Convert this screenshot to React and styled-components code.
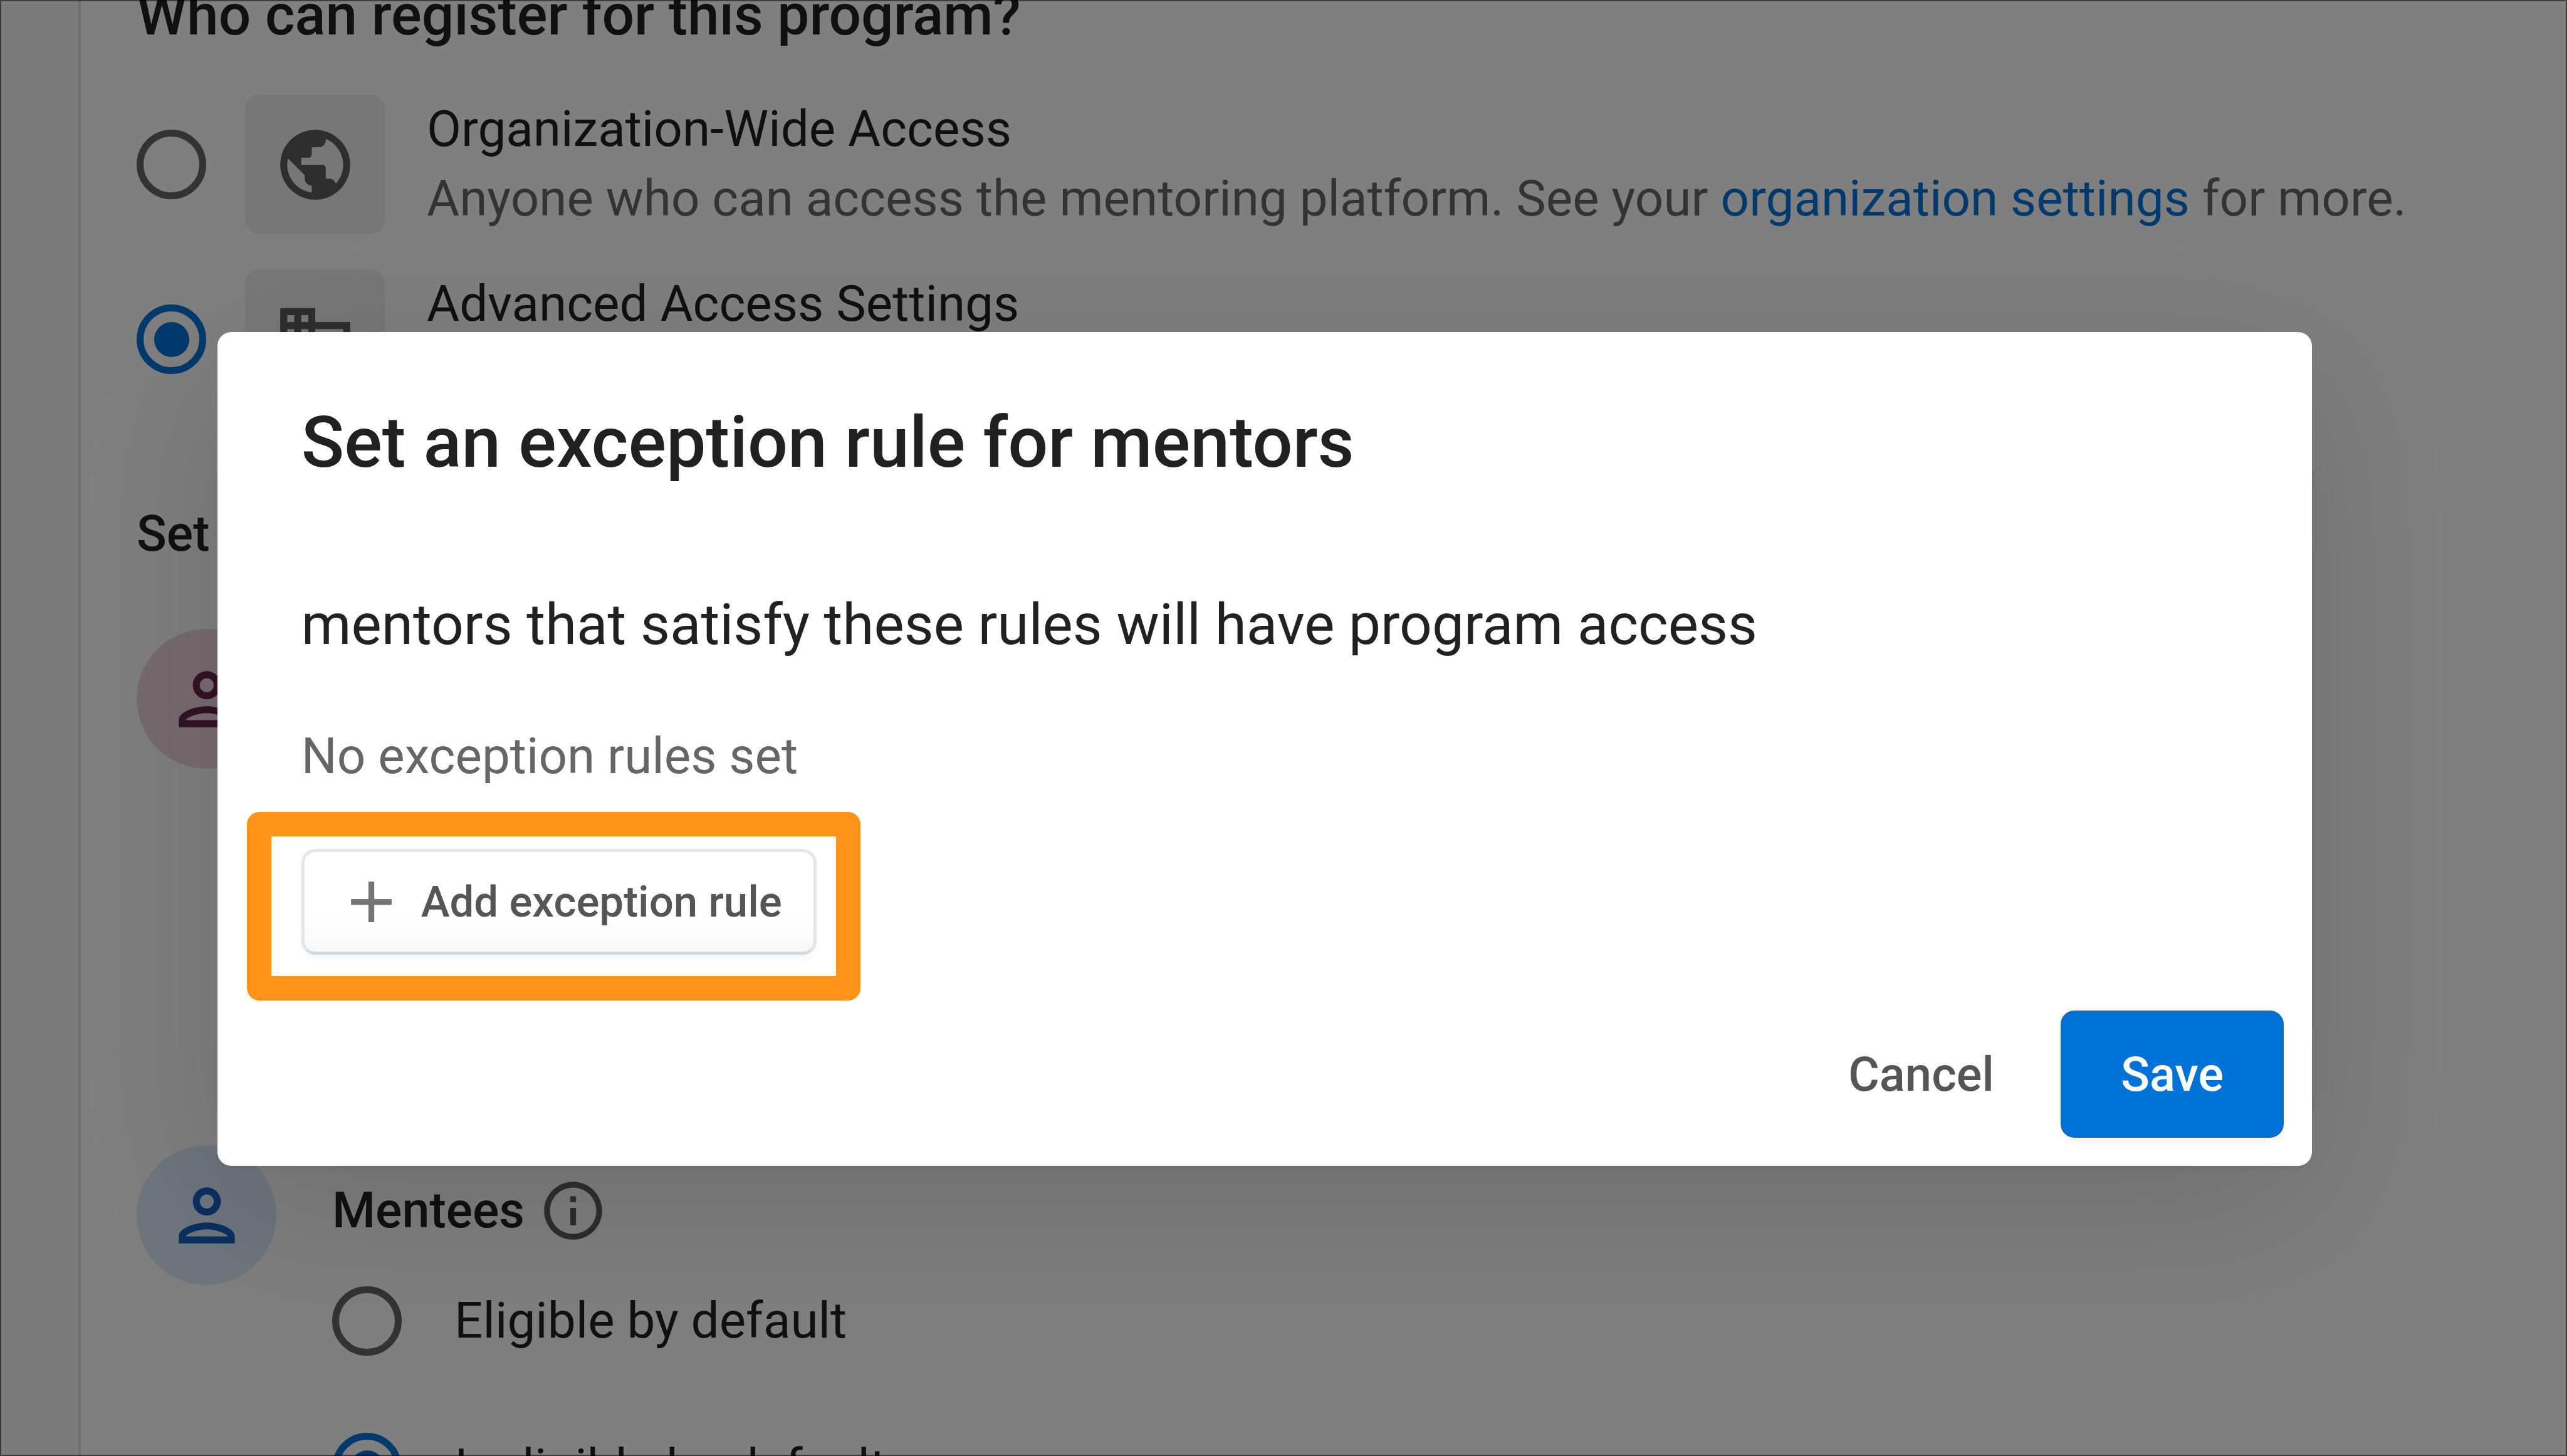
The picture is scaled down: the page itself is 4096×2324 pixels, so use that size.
import React from "react";
import styled, { createGlobalStyle } from "styled-components";
import {
  MdPublic,
  MdDomain,
  MdOutlinePerson,
  MdOutlineInfo,
  MdAdd
} from "react-icons/md";

const GlobalStyle = createGlobalStyle`
  * {
    box-sizing: border-box;
  }

  body {
    margin: 0;
    overflow: hidden;
    background: #ffffff;
    color: #212121;
    font-family: Roboto, "Liberation Sans", sans-serif;
    font-size: 80px;
    line-height: 111px;
  }
`;

const Page = styled.div`
  display: flex;
  height: 100vh;
  overflow: hidden;
`;

const Rail = styled.div`
  flex: none;
  width: 129px;
  background: #f6f6f6;
  border-right: 4px solid #dcdcdc;
`;

const Content = styled.main`
  flex: 1;
  min-width: 0;
  padding-left: 89px;
`;

const SectionTitle = styled.h2`
  margin: 0 0 103px;
  font-size: 91px;
  font-weight: 500;
  line-height: 48px;
`;

const AccessList = styled.div`
  display: flex;
  flex-direction: column;
  gap: 56px;
`;

const AccessRow = styled.label`
  display: flex;
  align-items: center;
`;

const Radio = styled.input.attrs({ type: "radio" })`
  appearance: none;
  flex: none;
  display: grid;
  place-items: center;
  width: 111px;
  height: 111px;
  margin: 0;
  border: 11px solid #666666;
  border-radius: 50%;

  &:checked {
    border-color: #0072d8;
  }

  &:checked::before {
    content: "";
    width: 56px;
    height: 56px;
    border-radius: 50%;
    background: #0072d8;
  }
`;

const IconTile = styled.span`
  flex: none;
  display: grid;
  place-items: center;
  width: 223px;
  height: 223px;
  margin: 0 67px 0 62px;
  border-radius: 22px;
  background: #eeeeee;
  color: #5c5c5c;
  font-size: 134px;
`;

const AccessText = styled.span`
  display: flex;
  flex-direction: column;
  align-self: flex-start;
  white-space: nowrap;
`;

const Description = styled.span`
  color: #666666;
`;

const Link = styled.a`
  color: #0072d8;
  text-decoration: none;
`;

const Subtitle = styled.h3`
  margin: 144px 0 96px;
  font-size: 79px;
  font-weight: 500;
`;

const RoleGroup = styled.section`
  display: flex;
  align-items: flex-start;
  gap: 89px;
  min-height: 824px;
`;

const Avatar = styled.div`
  flex: none;
  display: grid;
  place-items: center;
  width: 223px;
  height: 223px;
  border-radius: 50%;
  background: ${props => (props.$role === "mentor" ? "#f0d6e0" : "#dcebfa")};
  color: ${props => (props.$role === "mentor" ? "#66244a" : "#1460c0")};
  font-size: 134px;
`;

const RoleBody = styled.div`
  padding-top: 49px;
`;

const RoleName = styled.h4`
  display: flex;
  align-items: center;
  gap: 22px;
  margin: 0 0 65px;
  font-size: 79px;
  font-weight: 500;
`;

const InfoIcon = styled(MdOutlineInfo)`
  color: #5c5c5c;
  font-size: 111px;
`;

const Choices = styled.div`
  display: flex;
  flex-direction: column;
  gap: 123px;
`;

const Choice = styled.label`
  display: flex;
  align-items: center;
  gap: 84px;
  white-space: nowrap;
`;

const Backdrop = styled.div`
  position: fixed;
  inset: 0;
  display: flex;
  align-items: center;
  justify-content: center;
  padding: 67px 60px 0 0;
  border: 2px solid rgba(0, 0, 0, 0.5);
  background: rgba(0, 0, 0, 0.5);
`;

const Dialog = styled.div`
  width: 82.9%;
  border-radius: 22px;
  background: #ffffff;
  box-shadow: 0 67px 268px rgba(0, 0, 0, 0.15), 0 2px 8px rgba(0, 0, 0, 0.1);
`;

const DialogTitle = styled.h1`
  margin: 0;
  padding: 88px 134px 0;
  font-size: 113px;
  font-weight: 500;
  line-height: 178px;
`;

const DialogBody = styled.div`
  padding: 134px 134px 0;
`;

const Lead = styled.p`
  margin: 0 0 88px;
  font-size: 91px;
  line-height: 134px;
`;

const Empty = styled.p`
  margin: 0;
  color: #666666;
`;

const Highlight = styled.div`
  width: fit-content;
  margin: 33px 0 0 -87px;
  padding: 20px 31px 34px 48px;
  border: 39px solid #ff941a;
  border-radius: 20px;
`;

const AddButton = styled.button`
  display: flex;
  align-items: center;
  gap: 24px;
  height: 169px;
  padding: 0 50px 0 51px;
  border: 5px solid #e1e7ea;
  border-bottom-color: #d3dade;
  border-radius: 22px;
  background: linear-gradient(#ffffff 60%, #f8f8f8);
  box-shadow: 0 6px 12px rgba(0, 0, 0, 0.04);
  color: #555555;
  font: 500 69px Roboto, "Liberation Sans", sans-serif;
`;

const AddIcon = styled(MdAdd)`
  color: #757575;
  font-size: 111px;
`;

const Actions = styled.div`
  display: flex;
  justify-content: flex-end;
  padding: 16px 45px 45px;
`;

const TextButton = styled.button`
  height: 203px;
  padding: 0 106px;
  border: 0;
  background: none;
  color: #555555;
  font: 500 76px Roboto, "Liberation Sans", sans-serif;
`;

const SaveButton = styled.button`
  height: 203px;
  padding: 0 93px;
  border: 3px solid #0f6ac2;
  border-radius: 22px;
  background: #0072d8;
  box-shadow: 0 6px 12px rgba(0, 0, 0, 0.05);
  color: #ffffff;
  font: 500 76px Roboto, "Liberation Sans", sans-serif;
`;

function App() {
  return (
    <>
      <GlobalStyle />
      <Page>
        <Rail />
        <Content>
          <SectionTitle>Who can register for this program?</SectionTitle>
          <AccessList>
            <AccessRow>
              <Radio name="access" />
              <IconTile>
                <MdPublic />
              </IconTile>
              <AccessText>
                <span>Organization-Wide Access</span>
                <Description>
                  Anyone who can access the mentoring platform. See your{" "}
                  <Link href="#settings">organization settings</Link> for more.
                </Description>
              </AccessText>
            </AccessRow>
            <AccessRow>
              <Radio name="access" defaultChecked />
              <IconTile>
                <MdDomain />
              </IconTile>
              <AccessText>Advanced Access Settings</AccessText>
            </AccessRow>
          </AccessList>
          <Subtitle>Set</Subtitle>
          <RoleGroup>
            <Avatar $role="mentor">
              <MdOutlinePerson />
            </Avatar>
          </RoleGroup>
          <RoleGroup>
            <Avatar $role="mentee">
              <MdOutlinePerson />
            </Avatar>
            <RoleBody>
              <RoleName>
                Mentees
                <InfoIcon />
              </RoleName>
              <Choices>
                <Choice>
                  <Radio name="mentees" />
                  Eligible by default
                </Choice>
                <Choice>
                  <Radio name="mentees" defaultChecked />
                  Ineligible by default
                </Choice>
              </Choices>
            </RoleBody>
          </RoleGroup>
        </Content>
      </Page>
      <Backdrop>
        <Dialog role="dialog" aria-modal="true" aria-labelledby="dialog-title">
          <DialogTitle id="dialog-title">
            Set an exception rule for mentors
          </DialogTitle>
          <DialogBody>
            <Lead>mentors that satisfy these rules will have program access</Lead>
            <Empty>No exception rules set</Empty>
            <Highlight>
              <AddButton type="button">
                <AddIcon />
                Add exception rule
              </AddButton>
            </Highlight>
          </DialogBody>
          <Actions>
            <TextButton type="button">Cancel</TextButton>
            <SaveButton type="button">Save</SaveButton>
          </Actions>
        </Dialog>
      </Backdrop>
    </>
  );
}

export default App;
